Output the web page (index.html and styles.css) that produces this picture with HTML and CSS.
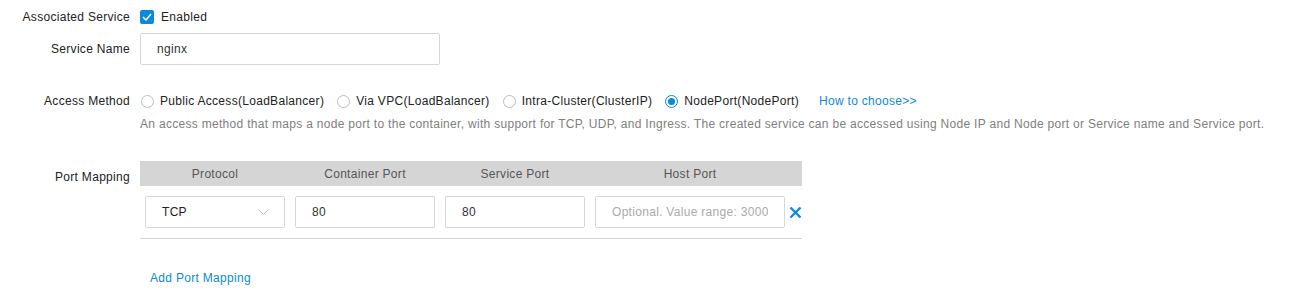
FILE: index.html
```html
<!DOCTYPE html>
<html>
  <head>
    <meta charset="utf-8" />
    <title>Service Settings</title>
    <link rel="stylesheet" href="styles.css">
  </head>
  <body>
    <form class="service-form">
      <div class="row row-check">
        <label class="label">Associated Service</label>
        <div class="field">
          <label class="check">
            <span class="check-box">
              <svg width="10" height="8" viewBox="0 0 10 8"><path d="M1 4 L4 7 L9 1" fill="none" stroke="#fff" stroke-width="1.4"/></svg>
            </span>
            Enabled
          </label>
        </div>
      </div>
      <div class="row row-name">
        <label class="label">Service Name</label>
        <div class="field">
          <input type="text" class="text-input name-input" value="nginx">
        </div>
      </div>
      <div class="row row-access">
        <label class="label">Access Method</label>
        <div class="field">
          <div class="radios">
            <label class="radio"><span class="radio-dot"></span>Public Access(LoadBalancer)</label>
            <label class="radio"><span class="radio-dot"></span>Via VPC(LoadBalancer)</label>
            <label class="radio"><span class="radio-dot"></span>Intra-Cluster(ClusterIP)</label>
            <label class="radio checked"><span class="radio-dot"></span>NodePort(NodePort)</label>
            <a class="link choose" href="#">How to choose&gt;&gt;</a>
          </div>
          <p class="help">An access method that maps a node port to the container, with support for TCP, UDP, and Ingress. The created service can be accessed using Node IP and Node port or Service name and Service port.</p>
        </div>
      </div>
      <div class="row row-ports">
        <label class="label">Port Mapping</label>
        <div class="field">
          <table class="ports">
            <thead>
              <tr>
                <th class="col-proto">Protocol</th>
                <th class="col-port">Container Port</th>
                <th class="col-port">Service Port</th>
                <th class="col-host">Host Port</th>
                <th class="col-del"></th>
              </tr>
            </thead>
            <tbody>
              <tr>
                <td>
                  <div class="select">
                    <span>TCP</span>
                    <svg width="11" height="6" viewBox="0 0 11 6"><path d="M0.5 0.5 L5.5 5.5 L10.5 0.5" fill="none" stroke="#c2c2c2" stroke-width="1"/></svg>
                  </div>
                </td>
                <td><input type="text" class="text-input" value="80"></td>
                <td><input type="text" class="text-input" value="80"></td>
                <td><input type="text" class="text-input" placeholder="Optional. Value range: 30000-32767"></td>
                <td class="del">
                  <svg width="13" height="13" viewBox="0 0 13 13"><path d="M1.5 1.5 L11.5 11.5 M11.5 1.5 L1.5 11.5" stroke="#0a8ad8" stroke-width="2.4"/></svg>
                </td>
              </tr>
            </tbody>
          </table>
          <a class="link add" href="#">Add Port Mapping</a>
        </div>
      </div>
    </form>
  </body>
</html>
```

FILE: styles.css
```css
body {
  margin: 0;
  font-family: "Liberation Sans", Helvetica, Arial, sans-serif;
  font-size: 12px;
  letter-spacing: 0.3px;
  color: #222;
  background: #fff;
}
.row {
  display: flex;
}
.label {
  width: 140px;
  flex-shrink: 0;
  padding-right: 10px;
  box-sizing: border-box;
  text-align: right;
  line-height: 16px;
  color: #222;
}
.field {
  flex-grow: 1;
}
.row-check {
  padding-top: 9px;
}
.check {
  display: flex;
  align-items: center;
  gap: 7px;
  line-height: 16px;
}
.check-box {
  width: 14px;
  height: 14px;
  border-radius: 2px;
  background: #0a8ad8;
  display: flex;
  align-items: center;
  justify-content: center;
}
.row-name {
  margin-top: 8px;
  align-items: center;
}
.text-input {
  font-family: "Liberation Sans", Helvetica, Arial, sans-serif;
  font-size: 12px;
  letter-spacing: 0.3px;
  color: #333;
  height: 32px;
  box-sizing: border-box;
  border: 1px solid #d7d7d7;
  border-radius: 2px;
  padding: 0 16px;
  width: 100%;
  outline: none;
}
.text-input::placeholder {
  color: #aaa;
}
.name-input {
  width: 300px;
}
.row-access {
  margin-top: 28px;
}
.radios {
  display: flex;
  align-items: center;
  line-height: 16px;
}
.radio {
  display: flex;
  align-items: center;
  margin-right: 12px;
}
.radio-dot {
  width: 13px;
  height: 13px;
  border: 1px solid #bdbdbd;
  border-radius: 50%;
  box-sizing: border-box;
  margin: 0 6px 0 1px;
  display: flex;
  align-items: center;
  justify-content: center;
}
.checked .radio-dot {
  border-color: #0a8ad8;
}
.checked .radio-dot::after {
  content: "";
  width: 7px;
  height: 7px;
  border-radius: 50%;
  background: #0a8ad8;
}
.link {
  color: #0a8ad8;
  text-decoration: none;
}
.choose {
  margin-left: 8px;
}
.help {
  margin: 6px 0 0;
  line-height: 18px;
  color: #808080;
}
.row-ports {
  margin-top: 28px;
}
.row-ports .label {
  padding-top: 8px;
}
.ports {
  border-collapse: collapse;
  width: 662px;
}
.ports th {
  background: #d5d5d5;
  font-weight: normal;
  color: #555;
  height: 25px;
  padding: 0;
  text-align: center;
}
.col-proto,
.col-port {
  width: 150px;
}
.col-host {
  width: 200px;
}
.col-del {
  width: 12px;
}
.ports td {
  padding: 10px 5px;
  border-bottom: 1px solid #d7d7d7;
}
.ports td.del {
  padding: 0;
}
.del svg {
  display: block;
  margin-left: -1px;
}
.select {
  height: 32px;
  box-sizing: border-box;
  border: 1px solid #d7d7d7;
  border-radius: 2px;
  display: flex;
  align-items: center;
  justify-content: space-between;
  padding: 0 15px 0 16px;
}
.add {
  display: inline-block;
  margin: 31px 0 0 10px;
  line-height: 16px;
}
```
